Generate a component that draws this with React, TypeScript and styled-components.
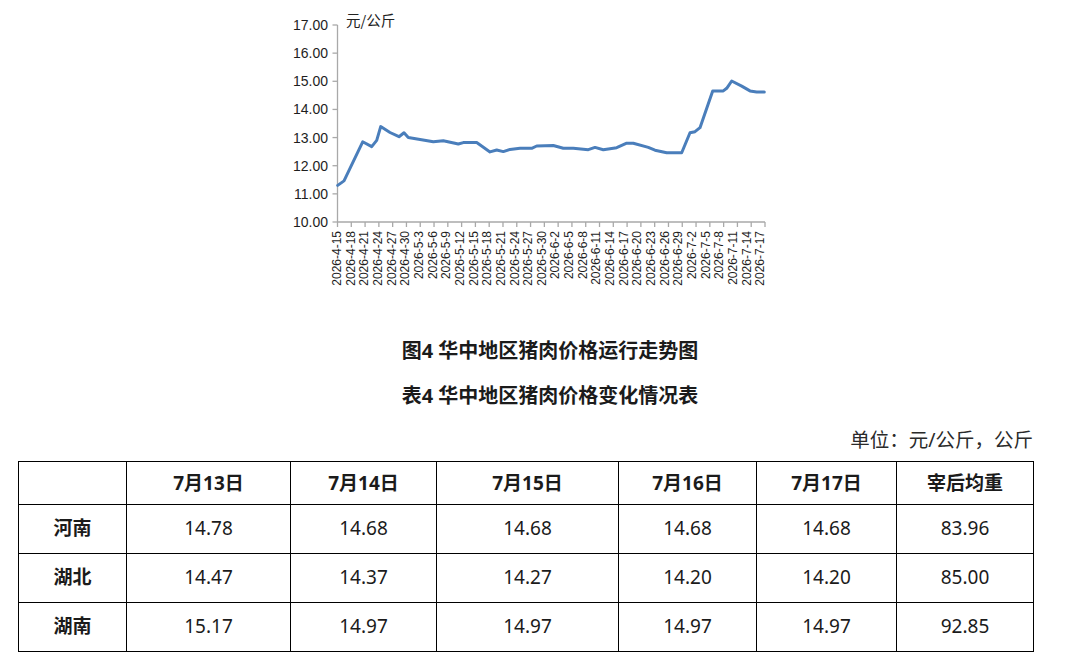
import React from "react";
import styled, { createGlobalStyle } from "styled-components";

const GlobalStyle = createGlobalStyle`
  html, body {
    margin: 0;
    padding: 0;
    background: #fff;
  }
  body {
    font-family: "Noto Sans", "Noto Sans CJK SC", sans-serif;
    color: #1b1b1b;
  }
`;

const Page = styled.div`
  width: 1073px;
  height: 662px;
  overflow: hidden;
  display: flex;
  flex-direction: column;
`;

const ChartFigure = styled.div`
  height: 300px;
  padding-left: 285px;

  svg {
    display: block;
  }
`;

const Caption = styled.div<{ $gap: number }>`
  margin-top: ${(p) => p.$gap}px;
  padding-left: 27px;
  text-align: center;
  font-size: 20px;
  font-weight: 700;
  line-height: 28px;
  color: #1b1b1b;
`;

const Unit = styled.div`
  width: 1015px;
  margin: 16px 0 0 18px;
  text-align: right;
  font-size: 19.5px;
  line-height: 28px;
  color: #2a2a2a;
`;

const Table = styled.table`
  margin: 7px 0 0 18px;
  width: 1015px;
  border-collapse: collapse;
  table-layout: fixed;
  font-size: 19px;
  line-height: 24px;
  color: #1b1b1b;
`;

const HeadCell = styled.th`
  border: 1.5px solid #000;
  height: 42px;
  padding: 0;
  font-weight: 700;
  text-align: center;
  vertical-align: middle;
`;

const RowHead = styled.th`
  border: 1.5px solid #000;
  height: 46px;
  padding: 0 0 2px;
  font-weight: 700;
  text-align: center;
  vertical-align: middle;
`;

const Cell = styled.td`
  border: 1.5px solid #000;
  height: 45px;
  padding: 0 0 3px;
  text-align: center;
  vertical-align: middle;
`;

const colWidths = [108, 164, 146, 182, 138, 140, 137];
const heads = ["", "7月13日", "7月14日", "7月15日", "7月16日", "7月17日", "宰后均重"];
const rows = [
  { name: "河南", values: ["14.78", "14.68", "14.68", "14.68", "14.68", "83.96"] },
  { name: "湖北", values: ["14.47", "14.37", "14.27", "14.20", "14.20", "85.00"] },
  { name: "湖南", values: ["15.17", "14.97", "14.97", "14.97", "14.97", "92.85"] },
];

// chart geometry, in page pixels
const X0 = 337.5;
const X1 = 765;
const Y_TOP = 25;
const Y_BOT = 222;
const yOf = (v: number) => Y_BOT - ((v - 10) / 7) * (Y_BOT - Y_TOP);

const labels = [
  "2026-4-15", "2026-4-18", "2026-4-21", "2026-4-24", "2026-4-27", "2026-4-30",
  "2026-5-3", "2026-5-6", "2026-5-9", "2026-5-12", "2026-5-15", "2026-5-18",
  "2026-5-21", "2026-5-24", "2026-5-27", "2026-5-30", "2026-6-2", "2026-6-5",
  "2026-6-8", "2026-6-11", "2026-6-14", "2026-6-17", "2026-6-20", "2026-6-23",
  "2026-6-26", "2026-6-29", "2026-7-2", "2026-7-5", "2026-7-8", "2026-7-11",
  "2026-7-14", "2026-7-17",
];

const series: [number, number][] = [
  [337.7, 11.3], [344, 11.46], [362.7, 12.85], [371.7, 12.68], [376.7, 12.9],
  [380.7, 13.39], [390, 13.18], [399, 13.03], [404, 13.17], [408.3, 13.0],
  [433.3, 12.85], [443.3, 12.89], [458.3, 12.77], [463.3, 12.82], [476.7, 12.82],
  [490, 12.49], [496.7, 12.56], [503.3, 12.5], [510, 12.58], [520, 12.62],
  [531.7, 12.62], [536.7, 12.7], [553.3, 12.72], [563.3, 12.62], [573.3, 12.62],
  [588.3, 12.57], [595, 12.65], [603.3, 12.57], [616.7, 12.64], [626.7, 12.8],
  [633.3, 12.8], [648.3, 12.65], [655, 12.55], [666.7, 12.46], [681.7, 12.46],
  [690, 13.17], [695, 13.21], [700, 13.35], [712.7, 14.66], [723.3, 14.66],
  [726.7, 14.75], [731.7, 15.01], [741.7, 14.83], [750, 14.66], [756.7, 14.62],
  [764.3, 14.62],
];

const PriceChart = () => {
  const tickStep = (X1 - X0) / (labels.length - 1);
  const labelStep = (760 - 336.7) / (labels.length - 1);
  const pts = series.map(([x, v]) => `${x},${yOf(v).toFixed(1)}`).join(" ");
  return (
    <svg width={490} height={300} viewBox="285 0 490 300">
      <g stroke="#a9a9a9" strokeWidth={1.3} fill="none">
        <line x1={X0} y1={Y_TOP} x2={X0} y2={Y_BOT} />
        <line x1={X0} y1={Y_BOT} x2={X1} y2={Y_BOT} />
        {Array.from({ length: 8 }, (_, i) => (
          <line key={i} x1={X0 - 5} x2={X0} y1={yOf(10 + i)} y2={yOf(10 + i)} />
        ))}
        {labels.map((_, i) => (
          <line key={i} x1={X0 + i * tickStep} x2={X0 + i * tickStep} y1={Y_BOT} y2={Y_BOT + 5} />
        ))}
      </g>
      <g fontFamily='"Liberation Sans", Arial, sans-serif' fontSize={14} fill="#1e1e1e" textAnchor="end">
        {Array.from({ length: 8 }, (_, i) => (
          <text key={i} x={328} y={yOf(10 + i) + 5}>
            {(10 + i).toFixed(2)}
          </text>
        ))}
      </g>
      <text x={346} y={26} fontFamily='"Noto Sans CJK SC", sans-serif' fontSize={14.5} fill="#222">
        元/公斤
      </text>
      <g fontFamily='"Liberation Sans", Arial, sans-serif' fontSize={12} fill="#1e1e1e" textAnchor="end">
        {labels.map((l, i) => {
          const x = 336.7 + i * labelStep + 4.3;
          return (
            <text key={l} x={x} y={231} transform={`rotate(-90 ${x} 231)`}>
              {l}
            </text>
          );
        })}
      </g>
      <polyline
        points={pts}
        fill="none"
        stroke="#4a7ebb"
        strokeWidth={3}
        strokeLinejoin="round"
        strokeLinecap="round"
      />
    </svg>
  );
};

export default function App() {
  return (
    <Page>
      <GlobalStyle />
      <ChartFigure>
        <PriceChart />
      </ChartFigure>
      <Caption $gap={37}>图4 华中地区猪肉价格运行走势图</Caption>
      <Caption $gap={17}>表4 华中地区猪肉价格变化情况表</Caption>
      <Unit>单位：元/公斤，公斤</Unit>
      <Table>
        <colgroup>
          {colWidths.map((w, i) => (
            <col key={i} style={{ width: w }} />
          ))}
        </colgroup>
        <thead>
          <tr>
            {heads.map((h, i) => (
              <HeadCell key={i}>{h}</HeadCell>
            ))}
          </tr>
        </thead>
        <tbody>
          {rows.map((r) => (
            <tr key={r.name}>
              <RowHead>{r.name}</RowHead>
              {r.values.map((v, i) => (
                <Cell key={i}>{v}</Cell>
              ))}
            </tr>
          ))}
        </tbody>
      </Table>
    </Page>
  );
}
